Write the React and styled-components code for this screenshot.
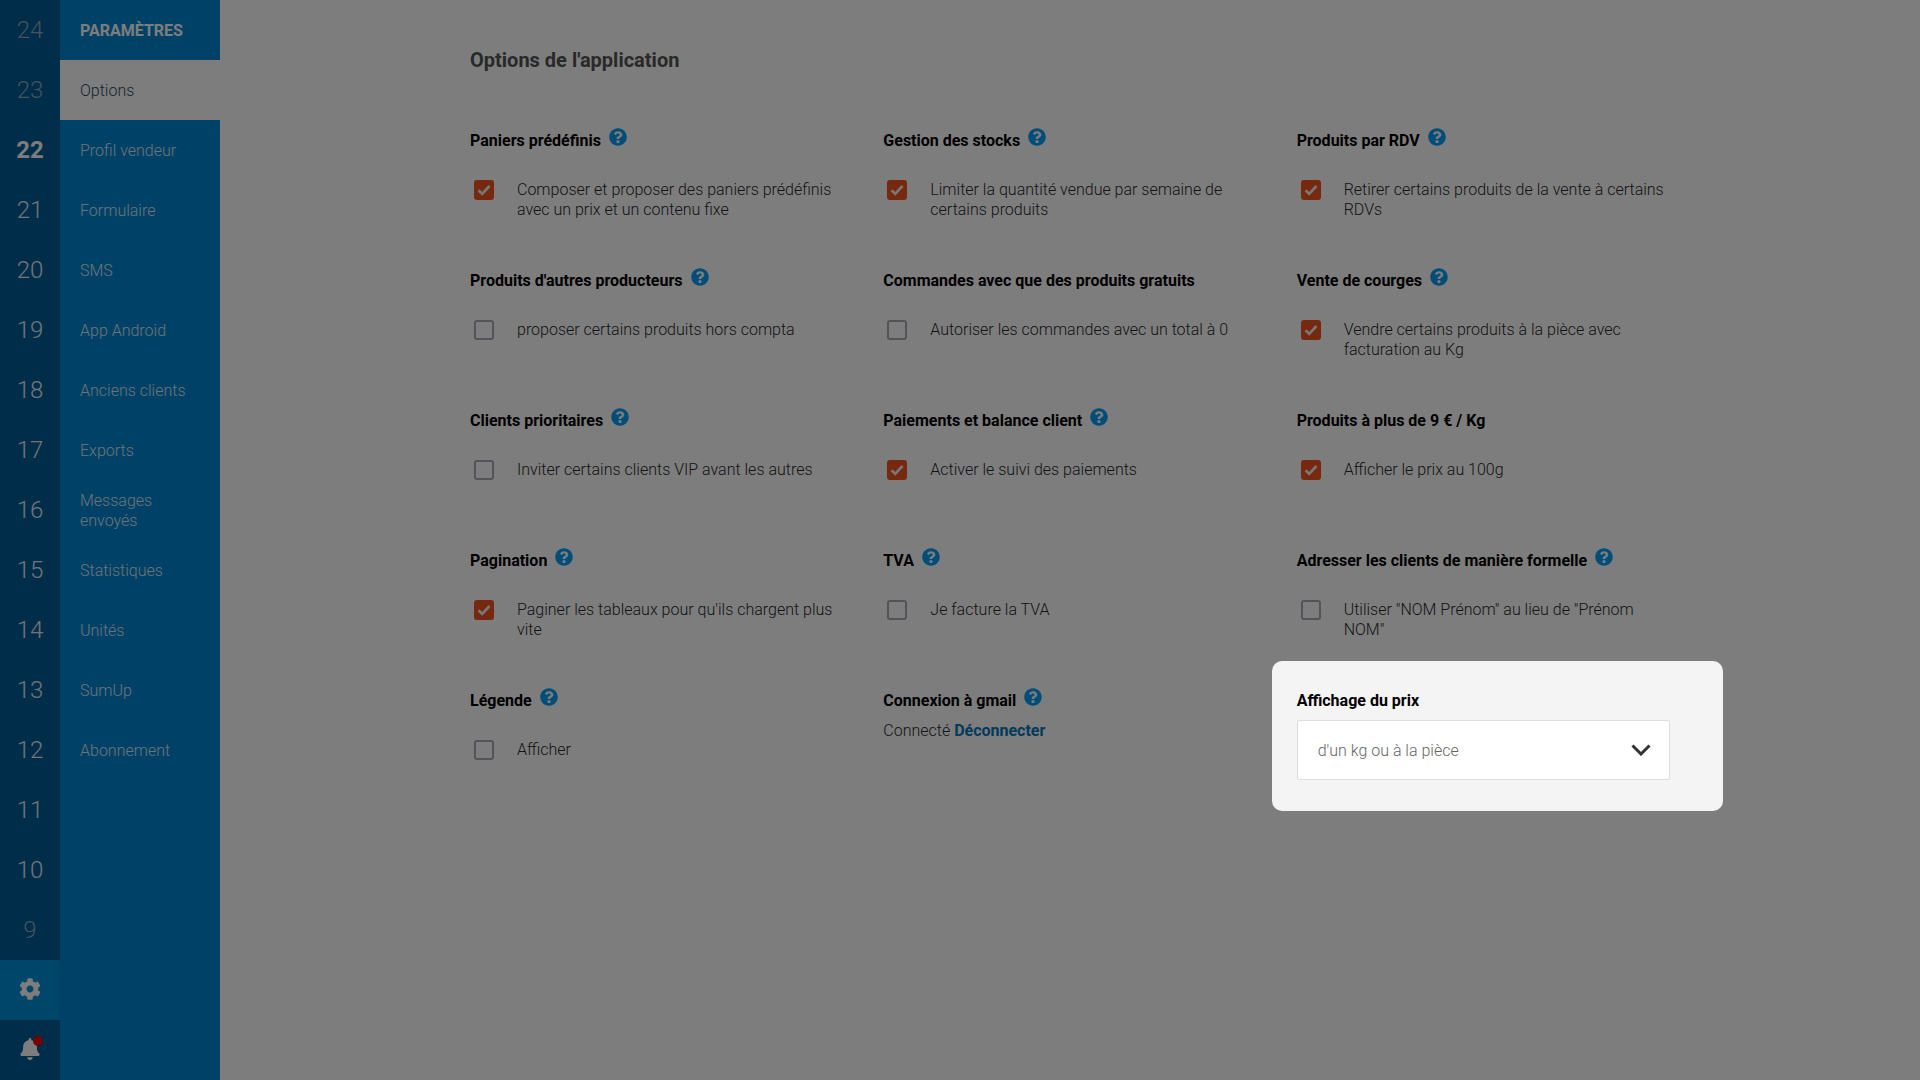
import React from "react";
import styled, { createGlobalStyle } from "styled-components";
import { FaBell, FaCog, FaQuestionCircle } from "react-icons/fa";

const days = [24, 23, 22, 21, 20, 19, 18, 17, 16, 15, 14, 13, 12, 11, 10, 9];

const menu = [
	"Options",
	"Profil vendeur",
	"Formulaire",
	"SMS",
	"App Android",
	"Anciens clients",
	"Exports",
	"Messages envoyés",
	"Statistiques",
	"Unités",
	"SumUp",
	"Abonnement",
];

const options = [
	{ title: "Paniers prédéfinis", help: true, checked: true, label: "Composer et proposer des paniers prédéfinis avec un prix et un contenu fixe" },
	{ title: "Gestion des stocks", help: true, checked: true, label: "Limiter la quantité vendue par semaine de certains produits" },
	{ title: "Produits par RDV", help: true, checked: true, label: "Retirer certains produits de la vente à certains RDVs" },
	{ title: "Produits d'autres producteurs", help: true, checked: false, label: "proposer certains produits hors compta" },
	{ title: "Commandes avec que des produits gratuits", checked: false, label: "Autoriser les commandes avec un total à 0" },
	{ title: "Vente de courges", help: true, checked: true, label: "Vendre certains produits à la pièce avec facturation au Kg" },
	{ title: "Clients prioritaires", help: true, checked: false, label: "Inviter certains clients VIP avant les autres" },
	{ title: "Paiements et balance client", help: true, checked: true, label: "Activer le suivi des paiements" },
	{ title: "Produits à plus de 9 € / Kg", checked: true, label: "Afficher le prix au 100g" },
	{ title: "Pagination", help: true, checked: true, label: "Paginer les tableaux pour qu'ils chargent plus vite" },
	{ title: "TVA", help: true, checked: false, label: "Je facture la TVA" },
	{ title: "Adresser les clients de manière formelle", help: true, checked: false, label: 'Utiliser "NOM Prénom" au lieu de "Prénom NOM"' },
	{ title: "Légende", help: true, checked: false, label: "Afficher" },
];

function Title({ children, help }) {
	return (
		<OptionTitle>
			{children}
			{help && (
				<Help>
					<FaQuestionCircle />
				</Help>
			)}
		</OptionTitle>
	);
}

function Option({ title, help, checked, label }) {
	return (
		<Cell>
			<Title help={help}>{title}</Title>
			<CheckRow>
				<Box $checked={checked}>
					{checked && (
						<svg width="14" height="12" viewBox="0 0 14 12" fill="none">
							<path d="M1.5 6.2 5.2 9.8 12.5 2" stroke="#f2f2f2" strokeWidth="2.6" />
						</svg>
					)}
				</Box>
				<CheckLabel>{label}</CheckLabel>
			</CheckRow>
		</Cell>
	);
}

export default function App() {
	return (
		<>
			<GlobalStyle />
			<Page>
				<Days>
					{days.map((day) => (
						<Day key={day} $current={day === 22} $dim={day === 9 || day === 23 || day === 24}>
							{day}
						</Day>
					))}
					<IconTab $active>
						<FaCog />
					</IconTab>
					<IconTab>
						<FaBell />
						<Dot />
					</IconTab>
				</Days>
				<Menu>
					<MenuHead>PARAMÈTRES</MenuHead>
					{menu.map((item, i) => (
						<MenuItem key={item} $active={i === 0}>
							{item}
						</MenuItem>
					))}
				</Menu>
				<Main>
					<PageTitle>Options de l'application</PageTitle>
					<Grid>
						{options.map((option) => (
							<Option key={option.title} {...option} />
						))}
						<Cell>
							<Title help>Connexion à gmail</Title>
							<Connected>
								Connecté <DisconnectLink>Déconnecter</DisconnectLink>
							</Connected>
						</Cell>
						<Highlight>
							<HighlightTitle>Affichage du prix</HighlightTitle>
							<Select>
								d'un kg ou à la pièce
								<svg width="20" height="12" viewBox="0 0 20 12" fill="none">
									<path d="M1.5 1.5 10 10 18.5 1.5" stroke="#333" strokeWidth="3" />
								</svg>
							</Select>
						</Highlight>
					</Grid>
				</Main>
				<Overlay />
			</Page>
		</>
	);
}

const GlobalStyle = createGlobalStyle`
	html, body {
		margin: 0;
		padding: 0;
		height: 100%;
		overflow: hidden;
		background: #fff;
	}
	* {
		box-sizing: border-box;
	}
	body {
		font-family: Roboto, "Liberation Sans", sans-serif;
		font-size: 16px;
		font-weight: 300;
		color: #222;
	}
`;

const Page = styled.div`
	display: flex;
	width: 1920px;
	height: 1080px;
	overflow: hidden;
`;

const Overlay = styled.div`
	position: fixed;
	inset: 0;
	background: rgba(0, 0, 0, 0.51);
	z-index: 10;
`;

const Days = styled.aside`
	width: 60px;
	flex: none;
	display: flex;
	flex-direction: column;
	background: #005c98;
`;

const Day = styled.div`
	height: 60px;
	display: flex;
	align-items: center;
	justify-content: center;
	font-size: 24px;
	font-weight: ${(p) => (p.$current ? 700 : 300)};
	color: ${(p) => (p.$current ? "#fff" : p.$dim ? "#8fa9bc" : "#e8eef2")};
`;

const IconTab = styled.div`
	position: relative;
	height: 60px;
	padding-bottom: 2px;
	display: flex;
	align-items: center;
	justify-content: center;
	font-size: 22px;
	color: #fff;
	background: ${(p) => (p.$active ? "#008ed9" : "transparent")};
`;

const Dot = styled.span`
	position: absolute;
	top: 16px;
	left: 33px;
	width: 10px;
	height: 10px;
	border-radius: 50%;
	background: #f00000;
`;

const Menu = styled.nav`
	width: 160px;
	flex: none;
	display: flex;
	flex-direction: column;
	background: #0086d2;
`;

const MenuHead = styled.div`
	height: 60px;
	display: flex;
	align-items: center;
	padding-left: 20px;
	font-weight: 700;
	color: #fff;
`;

const MenuItem = styled.div`
	height: 60px;
	display: flex;
	align-items: center;
	padding: 1px 20px 0;
	line-height: 20px;
	color: ${(p) => (p.$active ? "#2f4a5e" : "#dfeaf2")};
	background: ${(p) => (p.$active ? "#fff" : "transparent")};
`;

const Main = styled.main`
	flex: 1;
	padding: 48px 0 0 250px;
`;

const PageTitle = styled.h1`
	margin: 0 0 59px;
	font-size: 20px;
	line-height: 24px;
	font-weight: 700;
	color: #555;
`;

const Grid = styled.div`
	display: grid;
	grid-template-columns: repeat(3, 413.33px);
	grid-auto-rows: 140px;
`;

const Cell = styled.section`
	padding-right: 40px;
`;

const OptionTitle = styled.h2`
	display: flex;
	align-items: flex-start;
	margin: 0 0 29px;
	height: 20px;
	font-size: 16px;
	line-height: 20px;
	font-weight: 700;
	color: #000;
`;

const Help = styled.span`
	margin: -3px 0 0 8px;
	font-size: 18px;
	line-height: 18px;
	color: #009ff5;

	svg {
		display: block;
	}
`;

const CheckRow = styled.label`
	display: flex;
	align-items: flex-start;
	line-height: 20px;
	color: #2a2a2a;
`;

const Box = styled.span`
	flex: none;
	width: 20px;
	height: 20px;
	margin: 0 23px 0 4px;
	display: flex;
	align-items: center;
	justify-content: center;
	border-radius: 3px;
	background: ${(p) => (p.$checked ? "#f0541e" : "#fff")};
	border: ${(p) => (p.$checked ? "none" : "2px solid #a8acb6")};
`;

const CheckLabel = styled.span`
	padding-top: 0;
`;

const Connected = styled.div`
	margin-top: -19px;
	line-height: 20px;
	color: #2a2a2a;
`;

const DisconnectLink = styled.a`
	font-weight: 700;
	color: #0078bc;
`;

const Highlight = styled.section`
	position: relative;
	z-index: 11;
	align-self: start;
	width: 451px;
	height: 150px;
	margin: -30px 0 0 -25px;
	padding: 30px 25px 0;
	border-radius: 10px;
	background: #f4f4f4;
`;

const HighlightTitle = styled.h2`
	margin: 0 0 9px;
	font-size: 16px;
	line-height: 20px;
	font-weight: 700;
	color: #000;
`;

const Select = styled.div`
	width: 373px;
	height: 60px;
	display: flex;
	align-items: center;
	justify-content: space-between;
	padding: 0 18px 0 20px;
	background: #fff;
	border: 1px solid #ddd;
	border-radius: 2px;
	color: #666;
`;
